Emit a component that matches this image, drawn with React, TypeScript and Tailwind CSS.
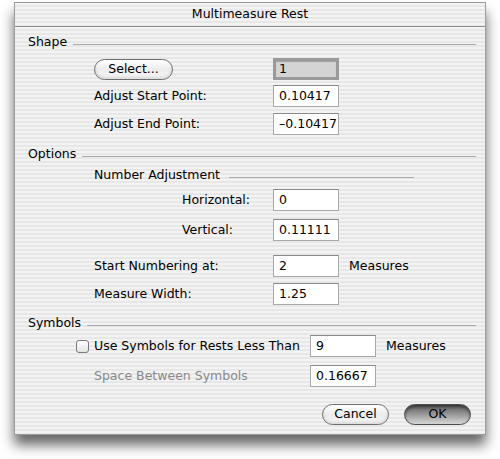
import React from "react";

const stripes =
  "bg-[repeating-linear-gradient(to_bottom,#f3f3f3_0px,#f3f3f3_2px,#e7e7e7_2px,#e7e7e7_4px)]";

function Field({ value, focused }: { value: string; focused?: boolean }) {
  if (focused) {
    return (
      <div className="w-[66px] h-[22px] border-[3px] border-[#9a9a9a] bg-[#d4d4d4] flex items-center pl-[3px] shadow-[inset_0_1px_1px_rgba(0,0,0,0.25)]">
        {value}
      </div>
    );
  }
  return (
    <div className="w-[66px] h-[22px] border border-[#a8a8a8] border-t-[#8a8a8a] bg-white flex items-center pl-[5px]">
      {value}
    </div>
  );
}

function Header({ label }: { label: string }) {
  return (
    <div className="flex items-center h-[18px] pl-[13px] pr-[9px]">
      <span>{label}</span>
      <div className="flex-1 h-px bg-[#a9a9a9] ml-[6px] mt-[5px]" />
    </div>
  );
}

function Row({
  label,
  value,
  focused,
  labelLeft = 79,
  suffix,
  className = "",
}: {
  label: string;
  value: string;
  focused?: boolean;
  labelLeft?: number;
  suffix?: string;
  className?: string;
}) {
  return (
    <div className={"flex items-center h-[22px] " + className}>
      <div
        className={labelLeft === 79 ? "pl-[79px] w-[258px]" : "pl-[167px] w-[258px]"}
      >
        {label}
      </div>
      <Field value={value} focused={focused} />
      {suffix && <span className="ml-[10px]">{suffix}</span>}
    </div>
  );
}

function AquaButton({
  label,
  width,
  primary,
}: {
  label: string;
  width: string;
  primary?: boolean;
}) {
  return (
    <div
      className={
        "h-[21px] rounded-full border flex items-center justify-center " +
        width +
        (primary
          ? " border-[#4a4a4a] bg-gradient-to-b from-[#5e5e5e] via-[#999999] to-[#d8d8d8] shadow-[inset_0_2px_3px_rgba(0,0,0,0.45)]"
          : " border-[#6e6e6e] bg-gradient-to-b from-[#ffffff] via-[#ececec] to-[#f8f8f8] shadow-[inset_0_-2px_3px_rgba(0,0,0,0.12)]")
      }
    >
      {label}
    </div>
  );
}

export default function App() {
  return (
    <div
      className="w-[500px] h-[459px] bg-white pt-[2px] pl-[14px] text-[12.5px] text-black"
      style={{ fontFamily: '"DejaVu Sans", sans-serif' }}
    >
      <div
        className={
          "w-[472px] h-[433px] border border-[#9c9c9c] shadow-[0_10px_12px_rgba(0,0,0,0.6)] " +
          stripes
        }
      >
        {/* Title bar */}
        <div className="h-[24px] border-b border-[#8d8d8d] flex items-center justify-center">
          Multimeasure Rest
        </div>

        <div className="mt-[6px]">
          <Header label="Shape" />

          <div className="flex items-center h-[22px] mt-[7px]">
            <div className="pl-[79px] w-[258px]">
              <AquaButton label="Select..." width="w-[79px]" />
            </div>
            <Field value="1" focused />
          </div>

          <Row label="Adjust Start Point:" value="0.10417" className="mt-[5px]" />
          <Row label="Adjust End Point:" value="–0.10417" className="mt-[6px]" />

          <div className="mt-[10px]">
            <Header label="Options" />
          </div>

          <div className="flex items-center h-[18px] mt-[3px] pl-[79px]">
            <span>Number Adjustment</span>
            <div className="w-[185px] h-px bg-[#a9a9a9] ml-[9px] mt-[5px]" />
          </div>

          <Row label="Horizontal:" value="0" labelLeft={167} className="mt-[5px]" />
          <Row label="Vertical:" value="0.11111" labelLeft={167} className="mt-[8px]" />

          <Row
            label="Start Numbering at:"
            value="2"
            suffix="Measures"
            className="mt-[14px]"
          />
          <Row label="Measure Width:" value="1.25" className="mt-[6px]" />

          <div className="mt-[9px]">
            <Header label="Symbols" />
          </div>

          <div className="flex items-center h-[22px] mt-[3px]">
            <div className="pl-[61px] w-[295px] flex items-center">
              <div className="w-[13px] h-[13px] rounded-[3px] border border-[#7a7a7a] bg-gradient-to-b from-white to-[#e4e4e4] mr-[5px]" />
              <span>Use Symbols for Rests Less Than</span>
            </div>
            <Field value="9" />
            <span className="ml-[10px]">Measures</span>
          </div>

          <div className="flex items-center h-[22px] mt-[8px]">
            <div className="pl-[79px] w-[295px] text-[#8a8a8a]">
              Space Between Symbols
            </div>
            <Field value="0.16667" />
          </div>

          <div className="flex justify-end gap-[15px] pr-[14px] mt-[17px]">
            <AquaButton label="Cancel" width="w-[67px]" />
            <AquaButton label="OK" width="w-[67px]" primary />
          </div>
        </div>
      </div>
    </div>
  );
}
